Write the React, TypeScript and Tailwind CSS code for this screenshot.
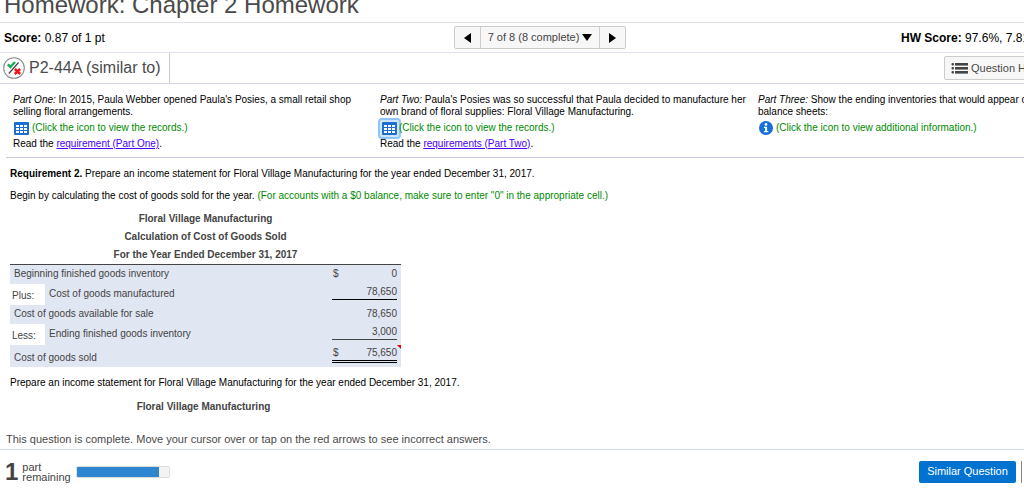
import type { ReactNode } from "react";

function TableIcon() {
  return (
    <svg viewBox="0 0 15 13" className="h-[13px] w-[15px]" aria-hidden="true">
      <rect width="15" height="13" rx="1" fill="#1b6fd0" />
      {[3, 6, 9].map((y) =>
        [2, 6, 10].map((x) => (
          <rect key={`${x}-${y}`} x={x} y={y} width="3" height="2" fill="#fff" />
        )),
      )}
    </svg>
  );
}

function InfoIcon() {
  return (
    <svg viewBox="0 0 14 14" className="size-[14px]" aria-hidden="true">
      <circle cx="7" cy="7" r="7" fill="#1670d8" />
      <circle cx="7" cy="3.4" r="1.3" fill="#fff" />
      <path d="M5 5.7h3.1v4.2h1.2v1.3H4.9V9.9h1.2V7H5z" fill="#fff" />
    </svg>
  );
}

function PartialIcon() {
  return (
    <svg viewBox="0 0 22 22" className="size-[22px]" role="img" aria-label="Partially correct">
      <circle cx="11" cy="11" r="10.3" fill="#fff" stroke="#8c8c8c" strokeWidth="1.1" />
      <path d="M4.8 7.4l2.6 2.6 4.6-5" fill="none" stroke="#18b05c" strokeWidth="2.5" />
      <path d="M5.8 16.5L15.6 5.5" stroke="#444" strokeWidth="1.2" />
      <path d="M11.8 12l5.4 5M17.2 12l-5.4 5" stroke="#f01414" strokeWidth="2.4" />
    </svg>
  );
}

function ListIcon() {
  return (
    <svg viewBox="0 0 17 11" className="h-[11px] w-[17px]" aria-hidden="true">
      {[0, 4, 8].map((y) => (
        <g key={y} fill="#444">
          <rect y={y} x="0.5" width="2.5" height="2.5" rx="1" />
          <rect x="4" y={y} width="13" height="2.6" />
        </g>
      ))}
    </svg>
  );
}

type PartProps = {
  title: string;
  text: string;
  icon: ReactNode;
  note: string;
  link?: string;
  focused?: boolean;
};

function Part({ title, text, icon, note, link, focused }: PartProps) {
  return (
    <section>
      <p>
        <i>{title}</i> {text}
      </p>
      <div className="flex h-5 items-center gap-[3px] text-[#008a00]">
        <button
          type="button"
          aria-label={note}
          className={
            focused
              ? "-mr-[3px] rounded-xs bg-[#cfe5fb] p-[2px] outline-2 outline-[#8fc4f8]"
              : "ml-px"
          }
        >
          {icon}
        </button>
        <span>({note})</span>
      </div>
      {link && (
        <p>
          Read the{" "}
          <a href="#requirement" className="text-[#4a00ff] underline">
            {link}
          </a>
          .
        </p>
      )}
    </section>
  );
}

export default function App() {
  return (
    <div className="overflow-hidden bg-white font-['Liberation_Sans',Arial,sans-serif] text-black">
      <div className="min-w-[1080px]">
        <header className="flex h-[23px] items-end overflow-hidden border-b border-[#dfe3ec] px-1">
          <h1 className="pb-[3px] text-2xl leading-7 text-[#4a4a4a]">Homework: Chapter 2 Homework</h1>
        </header>

        <div className="grid h-[30px] grid-cols-[1fr_auto_1fr] items-center border-b border-[#dfe3ec] text-xs">
          <p className="px-1">
            <b>Score:</b> 0.87 of 1 pt
          </p>
          <nav className="flex h-[23px] divide-x divide-[#ccc] rounded-xs border border-[#ccc] bg-[#f7f7f7] text-[11px] text-[#444]">
            <button type="button" aria-label="Previous question" className="flex w-[26px] items-center justify-center">
              <svg viewBox="0 0 7 10" className="h-[10px] w-[7px]"><path d="M7 0v10L0 5z" /></svg>
            </button>
            <button type="button" className="flex w-[119px] items-center justify-center gap-[3px] whitespace-nowrap">
              7 of 8 (8 complete)
              <svg viewBox="0 0 10 7" className="h-[7px] w-[10px]"><path d="M0 0h10L5 7z" fill="#000" /></svg>
            </button>
            <button type="button" aria-label="Next question" className="flex w-[25px] items-center justify-center">
              <svg viewBox="0 0 7 10" className="h-[10px] w-[7px]"><path d="M0 0v10l7-5z" /></svg>
            </button>
          </nav>
          <p className="w-[179px] justify-self-end whitespace-nowrap">
            <b>HW Score:</b> 97.6%, 7.81 of 8 pts
          </p>
        </div>

        <div className="flex h-[31px] items-center justify-between border-b border-[#d5d8e0] text-[#4a4a4a]">
          <div className="flex h-full items-center gap-1 border-r border-[#c9ccd6] pr-2 pl-[3px]">
            <PartialIcon />
            <h2 className="text-base">P2-44A (similar to)</h2>
          </div>
          <div className="flex w-[136px]">
            <button type="button" className="flex h-6 items-center gap-[3px] rounded-xs border border-[#ccc] bg-[#f7f7f7] px-[6px] text-[11px] whitespace-nowrap">
              <ListIcon />
              Question Help
            </button>
          </div>
        </div>

        <div className="ml-[6px] grid h-[74px] grid-cols-[357px_368px_1fr] gap-x-[10px] border-b border-[#c8cae0] pt-[10px] pl-[7px] text-[10px] leading-3">
          <Part
            title="Part One:"
            text="In 2015, Paula Webber opened Paula's Posies, a small retail shop selling floral arrangements."
            icon={<TableIcon />}
            note="Click the icon to view the records."
            link="requirement (Part One)"
          />
          <Part
            title="Part Two:"
            text="Paula's Posies was so successful that Paula decided to manufacture her own brand of floral supplies: Floral Village Manufacturing."
            icon={<TableIcon />}
            note="Click the icon to view the records."
            link="requirements (Part Two)"
            focused
          />
          <Part
            title="Part Three:"
            text="Show the ending inventories that would appear on the balance sheets:"
            icon={<InfoIcon />}
            note="Click the icon to view additional information."
          />
        </div>

        <main className="px-[10px] pt-[10px] text-[10px] leading-3">
          <p>
            <b>Requirement 2.</b> Prepare an income statement for Floral Village Manufacturing for the year ended December 31, 2017.
          </p>
          <p className="mt-[10px]">
            Begin by calculating the cost of goods sold for the year.{" "}
            <span className="text-[#008a00]">
              (For accounts with a $0 balance, make sure to enter "0" in the appropriate cell.)
            </span>
          </p>

          <table className="mt-2 w-[391px] table-fixed border-collapse text-[#444]">
            <caption className="text-center leading-[18px] font-bold">
              Floral Village Manufacturing
              <br />
              Calculation of Cost of Goods Sold
              <br />
              For the Year Ended December 31, 2017
            </caption>
            <colgroup>
              <col className="w-[35px]" />
              <col />
              <col className="w-[20px]" />
              <col className="w-[49px]" />
            </colgroup>
            <tbody className="border-t border-[#444] bg-[#e1e6f3]">
              <tr className="h-[19px]">
                <td colSpan={2} className="pl-1">Beginning finished goods inventory</td>
                <td className="pl-px">$</td>
                <td className="pr-1 text-right">0</td>
              </tr>
              <tr className="h-[21px]">
                <td className="bg-white pt-1 pl-[2px]">Plus:</td>
                <td className="pl-1">Cost of goods manufactured</td>
                <td colSpan={2} className="pr-1 align-top">
                  <div className="border-b border-black pt-[2px] pb-px text-right">78,650</div>
                </td>
              </tr>
              <tr className="h-[19px]">
                <td colSpan={2} className="pl-1">Cost of goods available for sale</td>
                <td />
                <td className="pr-1 text-right">78,650</td>
              </tr>
              <tr className="h-[21px]">
                <td className="bg-white pt-1 pl-[2px]">Less:</td>
                <td className="pl-1">Ending finished goods inventory</td>
                <td colSpan={2} className="pr-1 align-top">
                  <div className="border-b border-[#444] pt-[2px] pb-px text-right">3,000</div>
                </td>
              </tr>
              <tr className="h-[22px]">
                <td colSpan={2} className="pt-1 pl-1">Cost of goods sold</td>
                <td colSpan={2} className="relative pr-1 align-top">
                  <div className="flex justify-between border-b-3 border-double border-black pt-[2px] pb-px pl-px">
                    <span>$</span>
                    <span>75,650</span>
                  </div>
                  <svg viewBox="0 0 4 4" className="absolute top-0 right-0 size-1" aria-hidden="true">
                    <path d="M0 0h4v4z" fill="#e00000" />
                  </svg>
                </td>
              </tr>
            </tbody>
          </table>

          <p className="mt-[10px]">
            Prepare an income statement for Floral Village Manufacturing for the year ended December 31, 2017.
          </p>
          <h3 className="mt-3 w-[387px] text-center font-bold text-[#444]">Floral Village Manufacturing</h3>
        </main>

        <p className="mt-5 px-[6px] pb-1 text-[11px] leading-3 text-[#4a4a4a]">
          This question is complete. Move your cursor over or tap on the red arrows to see incorrect answers.
        </p>

        <footer className="flex h-[41px] items-center border-t border-[#d3dce6] px-[5px] pt-1 text-[#444]">
          <span className="text-2xl leading-6 font-bold">1</span>
          <span className="ml-1 w-[50px] text-[11px] leading-[10px]">part remaining</span>
          <div
            role="progressbar"
            aria-label="Question progress"
            aria-valuenow={89}
            className="ml-1 h-3 w-[94px] overflow-hidden rounded-xs border border-[#ddd] bg-[#f3f3f3]"
          >
            <div className="h-full w-[89%] bg-[#2c86d0]" />
          </div>
          <div className="ml-auto flex w-[156px] items-center gap-[5px]">
            <button type="button" className="h-[22px] w-[97px] rounded-xs bg-[#0073d1] text-[11px] text-white">
              Similar Question
            </button>
            <span className="h-[22px] border-l border-[#888]" />
          </div>
        </footer>
      </div>
    </div>
  );
}
